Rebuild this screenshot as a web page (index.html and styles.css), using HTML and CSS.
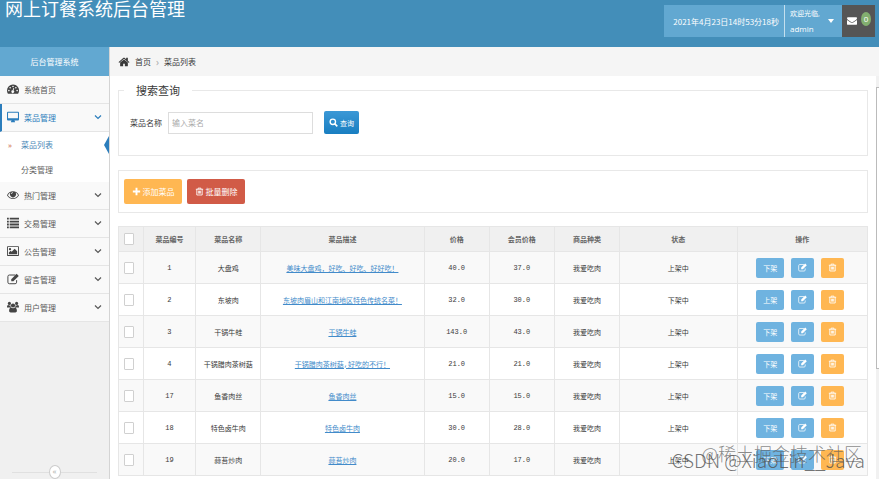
FILE: index.html
```
<!DOCTYPE html>
<html lang="zh-CN">
<head>
    <meta charset="UTF-8">
    <meta name="viewport" content="width=device-width, initial-scale=1.0">
    <title>网上订餐系统后台管理</title>
    <link rel="stylesheet" href="styles.css">
</head>
<body>
    <!-- iconos compartidos -->
    <svg class="sprite" aria-hidden="true">
        <symbol id="i-home" viewBox="0 0 1792 1792"><path d="M1472 992v480q0 26-19 45t-45 19h-384v-384h-256v384h-384q-26 0-45-19t-19-45v-480q0-1 .5-3t.5-3l575-474 575 474q1 2 1 6zm223-69l-62 74q-8 9-21 11h-3q-13 0-21-7l-692-577-692 577q-12 8-24 7-13-2-21-11l-62-74q-8-10-7-23.5t11-21.5l719-599q32-26 76-26t76 26l244 204v-195q0-14 9-23t23-9h192q14 0 23 9t9 23v408l219 182q10 8 11 21.5t-7 23.5z"/></symbol>
        <symbol id="i-dash" viewBox="0 0 16 16"><path fill-rule="evenodd" d="M8 2a8 8 0 0 0-8 8c0 1.600.4 3 1.200 4.200h13.600A8 8 0 0 0 8 2zM2.500 9a1.100 1.100 0 1 0 0 2.200 1.100 1.100 0 0 0 0-2.200zM4.200 5.200a1.100 1.100 0 1 0 0 2.200 1.100 1.100 0 0 0 0-2.200zM8 3.500a1.100 1.100 0 1 0 0 2.200 1.100 1.100 0 0 0 0-2.200zM11.800 5.200a1.100 1.100 0 1 0 0 2.200 1.100 1.100 0 0 0 0-2.200zM13.500 9a1.100 1.100 0 1 0 0 2.200 1.100 1.100 0 0 0 0-2.200zM8.600 6.500L7.500 9.700a1.800 1.800 0 1 0 1.200.3l.9-3.200z"/></symbol>
        <symbol id="i-desk" viewBox="0 0 16 16"><path fill-rule="evenodd" d="M1.200 1h13.600C15.500 1 16 1.500 16 2.200v9.100c0 .7-.5 1.200-1.200 1.200H10c0 .9.800 1.400.8 2 0 .3-.2.500-.5.500H5.700c-.3 0-.5-.2-.5-.5 0-.6.8-1.100.8-2H1.200C.5 12.500 0 12 0 11.300V2.200C0 1.500.5 1 1.200 1zm.2 1.300v7.200h13.200V2.300z"/></symbol>
        <symbol id="i-eye" viewBox="0 0 16 16"><path fill-rule="evenodd" d="M8 3C4.500 3 1.600 5 0 8.200 1.600 11.400 4.500 13.300 8 13.300s6.400-1.900 8-5.100C14.400 5 11.500 3 8 3zM4.800 4.800A4 4 0 1 0 11.200 4.800c1.500.7 2.700 1.900 3.600 3.400-1.500 2.500-3.900 4-6.800 4s-5.300-1.500-6.800-4c.9-1.500 2.100-2.700 3.600-3.400zM8 4.200a2.600 2.600 0 0 0-2.600 2.600h1A1.600 1.600 0 0 1 8 5.200z"/></symbol>
        <symbol id="i-list" viewBox="0 0 16 16"><path d="M0 1h2.400v2.400H0zM3.600 1H16v2.400H3.600zM0 4.900h2.400v2.400H0zM3.600 4.900H16v2.400H3.600zM0 8.800h2.400v2.400H0zM3.600 8.800H16v2.400H3.600zM0 12.700h2.400v2.400H0zM3.600 12.700H16v2.400H3.600z"/></symbol>
        <symbol id="i-pic" viewBox="0 0 16 16"><path fill-rule="evenodd" d="M1 1.500h14c.6 0 1 .4 1 1v11c0 .6-.4 1-1 1H1c-.6 0-1-.4-1-1v-11c0-.6.4-1 1-1zm.2 1.200v10.600h13.600V2.700zM4 4a1.500 1.500 0 1 0 0 3 1.500 1.500 0 0 0 0-3zM2.500 12.200V10l2.300-2.200L6.200 9l4-4 3.300 3.400v3.800z"/></symbol>
        <symbol id="i-edit" viewBox="0 0 16 16"><path d="M11 2.700H3.200a2 2 0 0 0-2 2v7.600a2 2 0 0 0 2 2h7.600a2 2 0 0 0 2-2V9.500" fill="none" stroke="currentColor" stroke-width="1.300"/><path d="M5.700 8.200L12.800 1l2.900 2.900-7.200 7.100H5.700z"/></symbol>
        <symbol id="i-group" viewBox="0 0 16 16"><circle cx="8" cy="6" r="2.800"/><circle cx="3.200" cy="3.200" r="2.100"/><circle cx="12.800" cy="3.200" r="2.100"/><path d="M0 8.500c0-2 .6-3.100 1.600-3.100.8.600 2 .7 2.900.3 0 1.200.4 2 .9 2.800H0zM16 8.500c0-2-.6-3.100-1.600-3.100-.8.600-2 .7-2.900.3 0 1.200-.4 2-.9 2.800H16zM5.500 8.600c1.500 1.200 3.500 1.200 5 0 1.700 0 2.700 2 2.700 4.500 0 1.300-.9 2.100-2.100 2.100H4.900c-1.200 0-2.100-.8-2.100-2.100 0-2.500 1-4.500 2.700-4.500z"/></symbol>
        <symbol id="i-down" viewBox="0 0 16 16"><path d="M2 5l6 6 6-6" fill="none" stroke="currentColor" stroke-width="2.400"/></symbol>
        <symbol id="i-mail" viewBox="0 0 16 16"><path d="M0 3.500C0 2.700.6 2 1.400 2h13.200c.8 0 1.400.7 1.400 1.500 0 .9-.6 1.700-1.400 2.300L9.300 9.500c-.9.600-1.700.6-2.600 0L1.400 5.800C.7 5.300 0 4.300 0 3.500zM0 6.200l6 4.200c1.300.9 2.700.9 4 0l6-4.200v6.400c0 .8-.6 1.400-1.400 1.400H1.400C.6 14 0 13.400 0 12.600z"/></symbol>
        <symbol id="i-search" viewBox="0 0 16 16"><circle cx="6.800" cy="6.800" r="4.800" fill="none" stroke="currentColor" stroke-width="2.400"/><path d="M10 10l4.800 4.800" stroke="currentColor" stroke-width="2.800"/></symbol>
        <symbol id="i-plus" viewBox="0 0 16 16"><path d="M6.300 1.500h3.400v4.800h4.800v3.400H9.700v4.800H6.300V9.700H1.500V6.300h4.800z"/></symbol>
        <symbol id="i-trash" viewBox="0 0 16 16"><path d="M1.500 4h13M5.500 4V2h5v2M3.200 4v10.200h9.600V4M6 6.500v5.200M8 6.500v5.200M10 6.500v5.200" fill="none" stroke="currentColor" stroke-width="1.500"/></symbol>
    </svg>

    <header class="navbar">
        <h1 class="brand">网上订餐系统后台管理</h1>
        <div class="nav-info">
            <span class="clock">2021年4月23日14时53分18秒</span>
            <button class="user" type="button">
                <span class="user-name"><small>欢迎光临,</small>admin</span>
                <span class="caret"></span>
            </button>
            <button class="mail" type="button" aria-label="消息">
                <svg class="icon"><use href="#i-mail"/></svg>
                <span class="badge">0</span>
            </button>
        </div>
    </header>

    <div class="container">
        <aside class="sidebar">
            <div class="side-title">后台管理系统</div>
            <nav class="menu">
                <a class="item" href="#"><svg class="icon"><use href="#i-dash"/></svg>系统首页</a>
                <a class="item active" href="#"><svg class="icon"><use href="#i-desk"/></svg>菜品管理<svg class="arrow"><use href="#i-down"/></svg></a>
                <div class="submenu">
                    <a class="sub current" href="#"><span class="mark">»</span>菜品列表</a>
                    <a class="sub" href="#"><span class="mark"></span>分类管理</a>
                </div>
                <a class="item" href="#"><svg class="icon"><use href="#i-eye"/></svg>热门管理<svg class="arrow"><use href="#i-down"/></svg></a>
                <a class="item" href="#"><svg class="icon"><use href="#i-list"/></svg>交易管理<svg class="arrow"><use href="#i-down"/></svg></a>
                <a class="item" href="#"><svg class="icon"><use href="#i-pic"/></svg>公告管理<svg class="arrow"><use href="#i-down"/></svg></a>
                <a class="item" href="#"><svg class="icon"><use href="#i-edit"/></svg>留言管理<svg class="arrow"><use href="#i-down"/></svg></a>
                <a class="item" href="#"><svg class="icon"><use href="#i-group"/></svg>用户管理<svg class="arrow"><use href="#i-down"/></svg></a>
            </nav>
            <div class="collapse"><button type="button" aria-label="收起菜单">«</button></div>
        </aside>

        <main class="main">
            <div class="breadcrumb">
                <svg class="icon"><use href="#i-home"/></svg>
                <a href="#">首页</a>
                <span class="sep">›</span>
                <span>菜品列表</span>
            </div>
            <div class="scroll">
                <div class="content">
                    <form>
                        <fieldset class="search">
                            <legend>搜索查询</legend>
                            <label for="dishName">菜品名称</label>
                            <input type="text" id="dishName" placeholder="输入菜名">
                            <button class="btn primary" type="button"><svg><use href="#i-search"/></svg>查询</button>
                        </fieldset>
                    </form>
                    <div class="tools">
                        <button class="btn big orange" type="button"><svg><use href="#i-plus"/></svg>添加菜品</button>
                        <button class="btn big red" type="button"><svg><use href="#i-trash"/></svg>批量删除</button>
                    </div>
                    <table class="dishes">
                        <colgroup>
                            <col class="c-check"><col class="c-id"><col class="c-name"><col class="c-desc"><col class="c-price"><col class="c-price"><col class="c-price"><col class="c-state"><col class="c-ops">
                        </colgroup>
                        <thead>
                            <tr>
                                <th><input type="checkbox" aria-label="全选"></th>
                                <th>菜品编号</th><th>菜品名称</th><th>菜品描述</th><th>价格</th><th>会员价格</th><th>商品种类</th><th>状态</th><th>操作</th>
                            </tr>
                        </thead>
                        <tbody>
                            <tr>
                                <td><input type="checkbox" aria-label="1"></td>
                                <td>1</td><td>大盘鸡</td><td><a href="#">美味大盘鸡，好吃、好吃、好好吃！</a></td><td>40.0</td><td>37.0</td><td>我爱吃肉</td><td>上架中</td>
                                <td><div class="ops"><button class="btn blue wide">下架</button><button class="btn blue" aria-label="编辑"><svg><use href="#i-edit"/></svg></button><button class="btn orange" aria-label="删除"><svg><use href="#i-trash"/></svg></button></div></td>
                            </tr>
                            <tr>
                                <td><input type="checkbox" aria-label="2"></td>
                                <td>2</td><td>东坡肉</td><td><a href="#">东坡肉眉山和江南地区特色传统名菜！</a></td><td>32.0</td><td>30.0</td><td>我爱吃肉</td><td>下架中</td>
                                <td><div class="ops"><button class="btn blue wide">上架</button><button class="btn blue" aria-label="编辑"><svg><use href="#i-edit"/></svg></button><button class="btn orange" aria-label="删除"><svg><use href="#i-trash"/></svg></button></div></td>
                            </tr>
                            <tr>
                                <td><input type="checkbox" aria-label="3"></td>
                                <td>3</td><td>干锅牛蛙</td><td><a href="#">干锅牛蛙</a></td><td>143.0</td><td>43.0</td><td>我爱吃肉</td><td>上架中</td>
                                <td><div class="ops"><button class="btn blue wide">下架</button><button class="btn blue" aria-label="编辑"><svg><use href="#i-edit"/></svg></button><button class="btn orange" aria-label="删除"><svg><use href="#i-trash"/></svg></button></div></td>
                            </tr>
                            <tr>
                                <td><input type="checkbox" aria-label="4"></td>
                                <td>4</td><td>干锅腊肉茶树菇</td><td><a href="#">干锅腊肉茶树菇,好吃的不行！</a></td><td>21.0</td><td>21.0</td><td>我爱吃肉</td><td>上架中</td>
                                <td><div class="ops"><button class="btn blue wide">下架</button><button class="btn blue" aria-label="编辑"><svg><use href="#i-edit"/></svg></button><button class="btn orange" aria-label="删除"><svg><use href="#i-trash"/></svg></button></div></td>
                            </tr>
                            <tr>
                                <td><input type="checkbox" aria-label="17"></td>
                                <td>17</td><td>鱼香肉丝</td><td><a href="#">鱼香肉丝</a></td><td>15.0</td><td>15.0</td><td>我爱吃肉</td><td>上架中</td>
                                <td><div class="ops"><button class="btn blue wide">下架</button><button class="btn blue" aria-label="编辑"><svg><use href="#i-edit"/></svg></button><button class="btn orange" aria-label="删除"><svg><use href="#i-trash"/></svg></button></div></td>
                            </tr>
                            <tr>
                                <td><input type="checkbox" aria-label="18"></td>
                                <td>18</td><td>特色卤牛肉</td><td><a href="#">特色卤牛肉</a></td><td>30.0</td><td>28.0</td><td>我爱吃肉</td><td>上架中</td>
                                <td><div class="ops"><button class="btn blue wide">下架</button><button class="btn blue" aria-label="编辑"><svg><use href="#i-edit"/></svg></button><button class="btn orange" aria-label="删除"><svg><use href="#i-trash"/></svg></button></div></td>
                            </tr>
                            <tr>
                                <td><input type="checkbox" aria-label="19"></td>
                                <td>19</td><td>蒜苔炒肉</td><td><a href="#">蒜苔炒肉</a></td><td>20.0</td><td>17.0</td><td>我爱吃肉</td><td>上架中</td>
                                <td><div class="ops"><button class="btn blue wide">下架</button><button class="btn blue" aria-label="编辑"><svg><use href="#i-edit"/></svg></button><button class="btn orange" aria-label="删除"><svg><use href="#i-trash"/></svg></button></div></td>
                            </tr>
                        </tbody>
                    </table>
                </div>
                <div class="track"><div class="thumb"></div></div>
            </div>
        </main>
    </div>

    <div class="mark-top">@稀土掘金技术社区</div>
    <div class="mark-bottom">CSDN @XiaoLin__Java</div>
</body>
</html>
```
FILE: styles.css
```
* {
    box-sizing: border-box;
}
body {
    margin: 0;
    height: 100vh;
    overflow: hidden;
    display: flex;
    flex-direction: column;
    font-family: "Open Sans", "Noto Sans CJK SC", sans-serif;
    font-size: 8px;
    color: #393939;
    background-color: #fff;
}
a {
    color: inherit;
    text-decoration: none;
}
button, input {
    font-family: inherit;
    font-size: inherit;
    margin: 0;
}
button {
    border: none;
    cursor: pointer;
}
svg {
    fill: currentColor;
    flex: none;
}
.sprite {
    display: none;
}
.icon {
    width: 12px;
    height: 12px;
}

/* cabecera */
.navbar {
    flex: none;
    height: 47px;
    display: flex;
    justify-content: space-between;
    padding: 0 4px 0 5px;
    background-color: #438eb9;
    color: #fff;
}
.brand {
    margin: 0;
    font-size: 18px;
    font-weight: 400;
    line-height: 18px;
}
.nav-info {
    display: flex;
    height: 32px;
    margin-top: 5px;
}
.clock {
    display: flex;
    align-items: center;
    justify-content: flex-end;
    width: 120px;
    padding-right: 5px;
    font-family: "Noto Sans CJK SC", sans-serif;
    background-color: #62a8d1;
}
.user {
    display: flex;
    align-items: center;
    justify-content: space-between;
    width: 58px;
    padding: 0 8px 0 5px;
    color: #fff;
    text-align: left;
    background-color: #62a8d1;
    border-left: 1px solid #c4dfee;
}
.user-name {
    line-height: 15px;
}
.user-name small {
    display: block;
    font-size: 7px;
}
.caret {
    border: 3px solid transparent;
    border-top: 4px solid #fff;
    border-bottom: 0;
}
.mail {
    display: flex;
    align-items: center;
    gap: 4px;
    width: 33px;
    padding: 0 4px 0 5px;
    color: #fff;
    background-color: #555;
}
.mail .icon {
    width: 10px;
}
.badge {
    width: 10px;
    height: 14px;
    margin-bottom: 4px;
    border-radius: 50%;
    line-height: 13px;
    text-align: center;
    background-color: #82af6f;
}

.container {
    flex: 1;
    min-height: 0;
    display: flex;
}

/* menu lateral */
.sidebar {
    flex: none;
    width: 110px;
    display: flex;
    flex-direction: column;
    background-color: #f0f0f0;
    border-right: 1px solid #d4d4d4;
}
.side-title {
    height: 29px;
    line-height: 29px;
    text-align: center;
    color: #fff;
    background-color: #62a8d1;
}
.item {
    display: flex;
    align-items: center;
    gap: 5px;
    height: 28px;
    padding: 0 7px 1px;
    color: #585858;
    background-color: #f9f9f9;
    border-bottom: 1px solid #e5e5e5;
}
.item .icon {
    color: #444;
}
.item .arrow {
    width: 8px;
    height: 8px;
    margin-left: auto;
}
.item.active, .item.active .icon {
    color: #2b7dbc;
}
.item.active {
    padding-left: 5px;
    border-left: 2px solid #2b7dbc;
}
.submenu {
    background-color: #fff;
}
.sub {
    display: flex;
    align-items: center;
    height: 25px;
    padding-left: 8px;
    color: #616161;
}
.mark {
    width: 13px;
    color: #c86139;
}
.sub.current {
    color: #4b88b7;
}
.sub.current::after {
    content: "";
    margin-left: auto;
    border: 9px solid transparent;
    border-left: 0;
    border-right: 5px solid #2b7dbc;
}
.collapse {
    display: flex;
    align-items: center;
    margin: auto 12px 0 12px;
}
.collapse::before, .collapse::after {
    content: "";
    flex: 1;
    border-top: 1px solid #e0e0e0;
}
.collapse button {
    width: 12px;
    height: 14px;
    padding: 0 0 2px;
    line-height: 10px;
    color: #aaa;
    background-color: #fff;
    border: 1px solid #ccc;
    border-radius: 50%;
}

/* contenido */
.main {
    flex: 1;
    min-width: 0;
    display: flex;
    flex-direction: column;
}
.breadcrumb {
    flex: none;
    display: flex;
    align-items: center;
    gap: 5px;
    height: 29px;
    padding-left: 8px;
    background-color: #f5f5f5;
}
.sep {
    color: #aaa;
    font-size: 10px;
}
.scroll {
    flex: 1;
    min-height: 0;
    display: flex;
}
.content {
    flex: 1;
    min-width: 0;
    padding: 7px 8px 0;
}
.track {
    width: 3px;
    padding-top: 11px;
    background-color: #f1f1f1;
}
.thumb {
    height: 72%;
    background-color: #fff;
    border: 1px solid #bbb;
    border-right: 0;
}
.search {
    display: flex;
    align-items: center;
    margin: 0 0 14px;
    padding: 13px 11px 21px;
    border: 1px solid #e8e8e8;
}
.search legend {
    margin-left: -6px;
    padding: 0 12px;
    font-size: 11px;
    line-height: 15px;
}
.search input {
    width: 145px;
    height: 22px;
    margin: 0 11px 0 6px;
    padding: 0 3px;
    border: 1px solid #ddd;
}
.search input::placeholder {
    color: #aaa;
}
.btn {
    display: flex;
    align-items: center;
    justify-content: center;
    gap: 2px;
    height: 20px;
    width: 23px;
    padding: 0;
    border-radius: 2px;
    font-size: 7px;
    color: #fff;
}
.btn svg {
    width: 9px;
    height: 9px;
}
.btn.primary {
    width: 35px;
    height: 23px;
    background-image: linear-gradient(#3b98d6, #197ec1);
}
.btn.big {
    width: 58px;
    height: 25px;
    font-size: 8px;
}
.btn.wide {
    width: 28px;
}
.blue {
    background-color: #6fb3e0;
}
.orange {
    background-color: #ffb752;
}
.red {
    background-color: #d15b47;
}
.tools {
    display: flex;
    align-items: center;
    gap: 5px;
    height: 43px;
    margin-bottom: 13px;
    padding-left: 5px;
    border: 1px solid #e8e8e8;
}
.dishes {
    width: 100%;
    table-layout: fixed;
    border-collapse: collapse;
    font-family: "Liberation Mono", "Noto Sans CJK SC", monospace;
    font-size: 7px;
    text-align: center;
}
.dishes th, .dishes td {
    height: 32px;
    padding: 0;
    border: 1px solid #e6e6e6;
}
.dishes th {
    height: 25px;
    color: #666;
    font-weight: 700;
    background-color: #f0f0f0;
}
.dishes tbody tr:nth-child(odd) {
    background-color: #f9f9f9;
}
.dishes a {
    color: #428bca;
    text-decoration: underline;
}
.dishes input {
    appearance: none;
    display: block;
    width: 10px;
    height: 12px;
    margin: 0 0 0 5px;
    border: 1px solid #d0d0d0;
    border-radius: 1px;
    background-color: #fff;
}
.c-check { width: 3.3%; }
.c-id { width: 7%; }
.c-name { width: 8.7%; }
.c-desc { width: 21.8%; }
.c-price { width: 8.7%; }
.c-state { width: 15.7%; }
.ops {
    display: flex;
    justify-content: center;
    gap: 7px;
    padding-right: 4px;
}

/* marcas de agua sobre la tabla */
.mark-top, .mark-bottom {
    position: absolute;
    font-family: "Noto Sans CJK SC", sans-serif;
    font-weight: 300;
    white-space: nowrap;
    pointer-events: none;
}
.mark-top {
    right: 17px;
    bottom: 14px;
    font-size: 18px;
    line-height: 24px;
    color: rgba(90, 90, 90, 0.7);
}
.mark-bottom {
    right: 14px;
    bottom: 7px;
    font-size: 19px;
    line-height: 24px;
    color: rgba(80, 80, 80, 0.8);
}
```
